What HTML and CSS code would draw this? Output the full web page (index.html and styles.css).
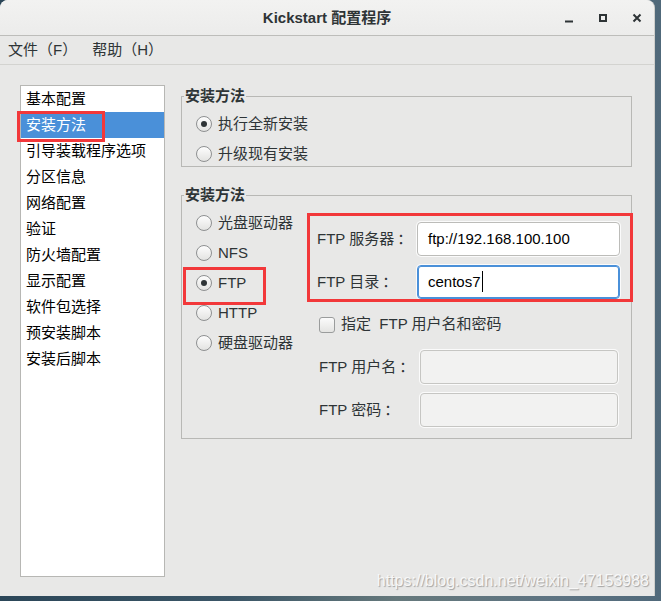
FILE: index.html
```html
<!DOCTYPE html>
<html lang="zh-CN">
<head>
<meta charset="utf-8">
<title>Kickstart 配置程序</title>
<link rel="stylesheet" href="styles.css">
</head>
<body>
<div class="window">
  <header class="titlebar">
    <div class="tb-side"></div>
    <div class="tb-title">Kickstart 配置程序</div>
    <div class="tb-side tb-buttons">
      <span class="tb-btn"><svg width="10" height="10" viewBox="0 0 10 10"><rect x="1" y="7.5" width="8" height="2" fill="#2e3436"/></svg></span>
      <span class="tb-btn"><svg width="10" height="10" viewBox="0 0 10 10"><rect x="2" y="2" width="6" height="6" fill="none" stroke="#2e3436" stroke-width="2"/></svg></span>
      <span class="tb-btn"><svg width="10" height="10" viewBox="0 0 10 10"><path d="M1.5 1.5 L8.5 8.5 M8.5 1.5 L1.5 8.5" stroke="#2e3436" stroke-width="2" fill="none"/></svg></span>
    </div>
  </header>
  <nav class="menubar">
    <span class="menu-item">文件（F）</span>
    <span class="menu-item">帮助（H）</span>
  </nav>
  <main class="content">
    <ul class="sidebar">
      <li>基本配置</li>
      <li class="sel">安装方法</li>
      <li>引导装载程序选项</li>
      <li>分区信息</li>
      <li>网络配置</li>
      <li>验证</li>
      <li>防火墙配置</li>
      <li>显示配置</li>
      <li>软件包选择</li>
      <li>预安装脚本</li>
      <li>安装后脚本</li>
    </ul>
    <section class="panel">
      <fieldset class="frame">
        <legend>安装方法</legend>
        <div class="frame-body radios">
          <div class="radio-row"><span class="radio on"></span><span>执行全新安装</span></div>
          <div class="radio-row"><span class="radio"></span><span>升级现有安装</span></div>
        </div>
      </fieldset>
      <fieldset class="frame frame2">
        <legend>安装方法</legend>
        <div class="frame-body split">
          <div class="radios left-col">
            <div class="radio-row"><span class="radio"></span><span>光盘驱动器</span></div>
            <div class="radio-row"><span class="radio"></span><span>NFS</span></div>
            <div class="radio-row marked"><span class="radio on"></span><span>FTP</span></div>
            <div class="radio-row"><span class="radio"></span><span>HTTP</span></div>
            <div class="radio-row"><span class="radio"></span><span>硬盘驱动器</span></div>
          </div>
          <div class="right-col">
            <div class="ftp-group">
              <label class="flabel">FTP 服务器<span class="colon">：</span></label>
              <div class="entry">ftp://192.168.100.100</div>
              <label class="flabel">FTP 目录<span class="colon">：</span></label>
              <div class="entry focus">centos7<span class="caret"></span></div>
            </div>
            <div class="check-row"><span class="checkbox"></span><span>指定&nbsp; FTP 用户名和密码</span></div>
            <div class="user-group">
              <label class="flabel">FTP 用户名<span class="colon">：</span></label>
              <div class="entry disabled"></div>
              <label class="flabel">FTP 密码<span class="colon">：</span></label>
              <div class="entry disabled"></div>
            </div>
          </div>
        </div>
      </fieldset>
    </section>
  </main>
  <div class="watermark">https://blog.csdn.net/weixin_47153988</div>
</div>
</body>
</html>
```
FILE: styles.css
```css
* { box-sizing: border-box; }
html, body {
  margin: 0;
  padding: 0;
  width: 661px;
  height: 601px;
  overflow: hidden;
}
body {
  background: linear-gradient(90deg, #2b4658 0%, #3b5667 35%, #66797c 60%, #5d7382 85%, #50697a 100%);
  font-family: "Liberation Sans", "Noto Sans CJK SC", sans-serif;
  font-size: 15px;
  line-height: 18px;
  color: #2e3436;
}
.window {
  position: relative;
  width: 655px;
  height: 596px;
  background: #e8e8e7;
  border-radius: 8px 8px 0 0;
  display: flex;
  flex-direction: column;
  border-right: 1px solid #cfcfcc;
}
.titlebar {
  height: 36px;
  flex: none;
  display: grid;
  grid-template-columns: 1fr auto 1fr;
  align-items: center;
  background: linear-gradient(#f2f2f1, #ececeb);
  border-bottom: 1px solid #bdbdba;
  border-radius: 8px 8px 0 0;
}
.tb-title {
  font-weight: bold;
  line-height: 34px;
  color: #2e3436;
}
.tb-buttons {
  display: flex;
  justify-content: flex-end;
  height: 35px;
}
.tb-btn {
  width: 34px;
  height: 35px;
  display: flex;
  align-items: center;
  justify-content: center;
}
.tb-btn svg { display: block; }
.menubar {
  height: 29px;
  flex: none;
  display: flex;
  gap: 15px;
  padding-left: 8px;
  line-height: 28px;
  border-bottom: 1px solid #d3d3d0;
  color: #2e3436;
}
.content {
  flex: 1;
  display: flex;
  gap: 16px;
  padding: 20px 22px 19px 20px;
  min-height: 0;
}
.sidebar {
  list-style: none;
  margin: 0;
  padding: 0;
  width: 145px;
  flex: none;
  background: #fff;
  border: 1px solid #b7b7b4;
  color: #000;
}
.sidebar li {
  height: 26px;
  line-height: 25px;
  padding-left: 5px;
  white-space: nowrap;
}
.sidebar li.sel {
  position: relative;
  background: #4a90d9;
  color: #fff;
}
.sidebar li.sel::after {
  content: "";
  position: absolute;
  left: -4px;
  top: -1px;
  width: 82px;
  height: 25px;
  border: 3px solid #f2383a;
}
.panel {
  width: 451px;
  flex: none;
  padding-top: 2px;
}
.frame {
  margin: 0;
  padding: 0 1px 0 14px;
  min-width: 0;
  border: 1px solid #b8b8b5;
}
.frame legend {
  margin-left: -12px;
  padding: 0 1px;
  line-height: 18px;
  font-weight: bold;
  color: #2e3436;
}
.frame2 {
  margin-top: 19px;
  padding-bottom: 11px;
}
.frame-body { padding-top: 7px; }
.radios {
  display: flex;
  flex-direction: column;
  gap: 6px;
}
.radio-row {
  height: 24px;
  display: flex;
  align-items: center;
  gap: 6px;
  white-space: nowrap;
}
.radio-row span:last-child { margin-top: -1px; }
.radio {
  width: 16px;
  height: 16px;
  border-radius: 50%;
  border: 1px solid #8e9091;
  background: linear-gradient(#fdfdfd, #e3e3e1);
  display: flex;
  align-items: center;
  justify-content: center;
  flex: none;
}
.radio.on::after {
  content: "";
  width: 6px;
  height: 6px;
  border-radius: 50%;
  background: #2e3436;
}
.marked { position: relative; }
.marked::after {
  content: "";
  position: absolute;
  left: -13px;
  top: -4px;
  width: 77px;
  height: 32px;
  border: 3px solid #f2383a;
}
.split {
  display: flex;
}
.left-col {
  width: 114px;
  flex: none;
}
.right-col {
  flex: 1;
  min-width: 0;
}
.ftp-group {
  margin-top: 5px;
  padding: 6px 0 0 7px;
  outline: 3px solid #f2383a;
  display: grid;
  grid-template-columns: 100px 203px;
  row-gap: 9px;
  align-items: center;
}
.flabel {
  white-space: nowrap;
  color: #2e3436;
  margin-top: -2px;
}
.colon {
  font-family: "Noto Sans CJK TC", sans-serif;
  padding-left: 3px;
}
.entry {
  height: 34px;
  border: 1px solid #bcbcb9;
  border-radius: 4px;
  background: #fff;
  box-shadow: 0 0 0 1px #fbfbfb;
  padding-left: 10px;
  line-height: 31px;
  color: #000;
  white-space: nowrap;
}
.entry.focus {
  border-color: #4a90d9;
  box-shadow: inset 0 0 0 1px #4a90d9, 0 0 0 1px #fbfbfb;
}
.caret {
  display: inline-block;
  width: 1px;
  height: 21px;
  background: #000;
  vertical-align: middle;
  margin-left: 1px;
  margin-top: -3px;
}
.entry.disabled {
  background: #f2f2f1;
  border-color: #c6c6c3;
}
.check-row {
  margin-top: 14px;
  height: 24px;
  padding-left: 9px;
  display: flex;
  align-items: center;
  gap: 6px;
  white-space: nowrap;
}
.check-row span:last-child { margin-top: -2px; }
.checkbox {
  width: 16px;
  height: 16px;
  border: 1px solid #9a9c9c;
  border-radius: 3px;
  background: linear-gradient(#fbfbfb, #e4e4e2);
  flex: none;
}
.user-group {
  margin-top: 13px;
  padding-left: 9px;
  display: grid;
  grid-template-columns: 101px 198px;
  row-gap: 9px;
  align-items: center;
}
.watermark {
  position: absolute;
  right: 5px;
  bottom: 6px;
  font-family: "Liberation Sans", sans-serif;
  font-size: 16px;
  line-height: 18px;
  color: rgba(250, 250, 250, 0.95);
  text-shadow: 1px 1px 1px rgba(0, 0, 0, 0.3);
  white-space: nowrap;
}
```
